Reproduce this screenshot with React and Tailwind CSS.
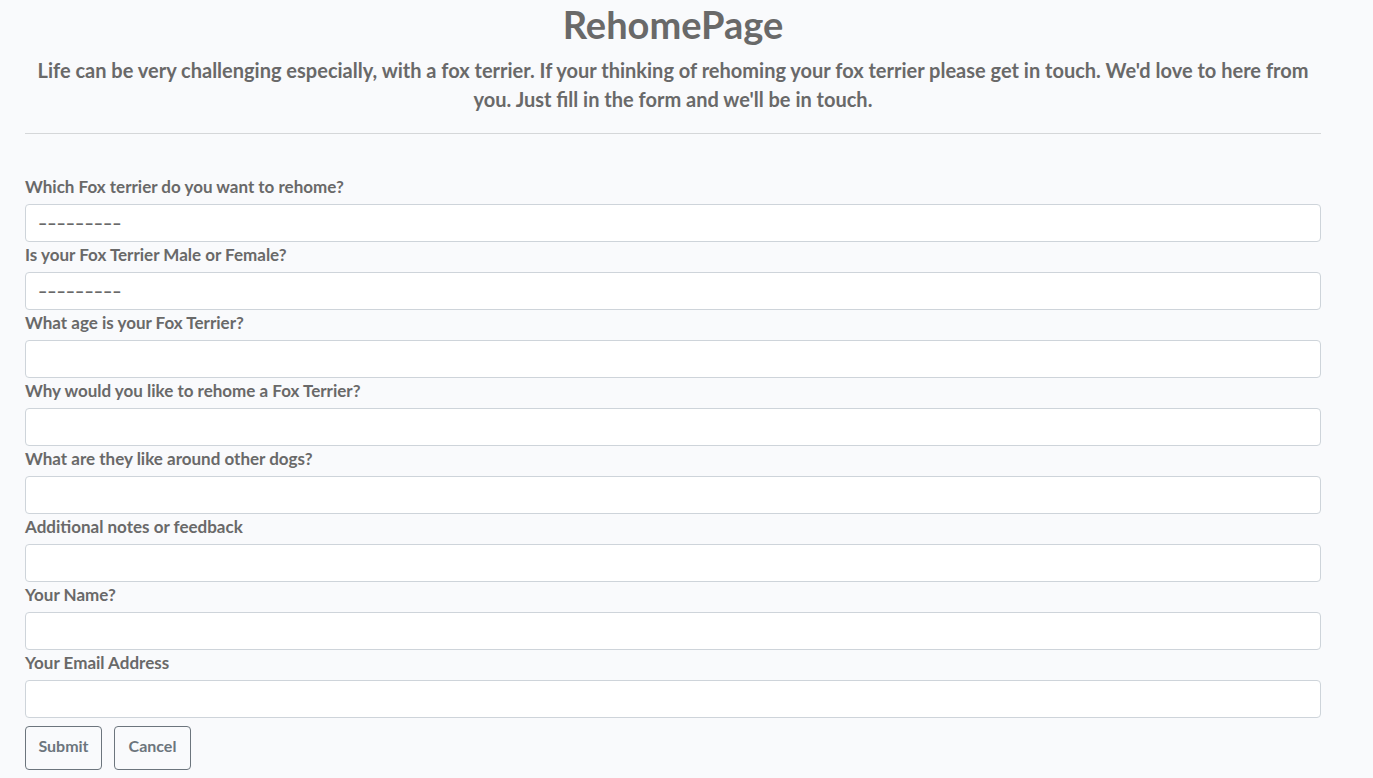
const fields = [
  { id: "terrier", label: "Which Fox terrier do you want to rehome?", type: "select" },
  { id: "sex", label: "Is your Fox Terrier Male or Female?", type: "select" },
  { id: "age", label: "What age is your Fox Terrier?", type: "text" },
  { id: "reason", label: "Why would you like to rehome a Fox Terrier?", type: "text" },
  { id: "dogs", label: "What are they like around other dogs?", type: "text" },
  { id: "notes", label: "Additional notes or feedback", type: "text" },
  { id: "name", label: "Your Name?", type: "text" },
  { id: "email", label: "Your Email Address", type: "email" },
];

const controlClass =
  "block h-[38px] w-full appearance-none rounded border border-[#ced4da] bg-white px-3 text-base font-black text-[#696969] outline-none focus:border-[#80bdff]";

function Field({ id, label, type }) {
  return (
    <div>
      <label htmlFor={id} className="block h-[30px] text-[17px] leading-[26px]">
        {label}
      </label>
      {type === "select" ? (
        <select id={id} name={id} className={controlClass}>
          <option value="">–––––––––</option>
        </select>
      ) : (
        <input id={id} name={id} type={type} className={controlClass} />
      )}
    </div>
  );
}

const buttonClass =
  "h-11 min-w-[77px] rounded border border-[#6c757d] px-3 pb-1 text-base text-[#6c757d] hover:bg-[#6c757d] hover:text-white";

export default function App() {
  return (
    <main className="min-h-screen bg-[#f9fafc] pr-[52px] pb-2 pl-[25px] font-['Lato',sans-serif] font-bold text-[#696969]">
      <header className="border-b border-[#d5d7d9] pb-[19px] text-center">
        <h1 className="pb-2 text-[38px] leading-[48px]">RehomePage</h1>
        <p className="text-xl leading-[29px]">
          Life can be very challenging especially, with a fox terrier. If your thinking of rehoming your fox terrier
          please get in touch. We'd love to here from you. Just fill in the form and we'll be in touch.
        </p>
      </header>
      <form className="pt-10" onSubmit={(event) => event.preventDefault()}>
        {fields.map((field) => (
          <Field key={field.id} {...field} />
        ))}
        <div className="flex gap-3 pt-2">
          <button type="submit" className={buttonClass}>
            Submit
          </button>
          <button type="button" className={buttonClass}>
            Cancel
          </button>
        </div>
      </form>
    </main>
  );
}
